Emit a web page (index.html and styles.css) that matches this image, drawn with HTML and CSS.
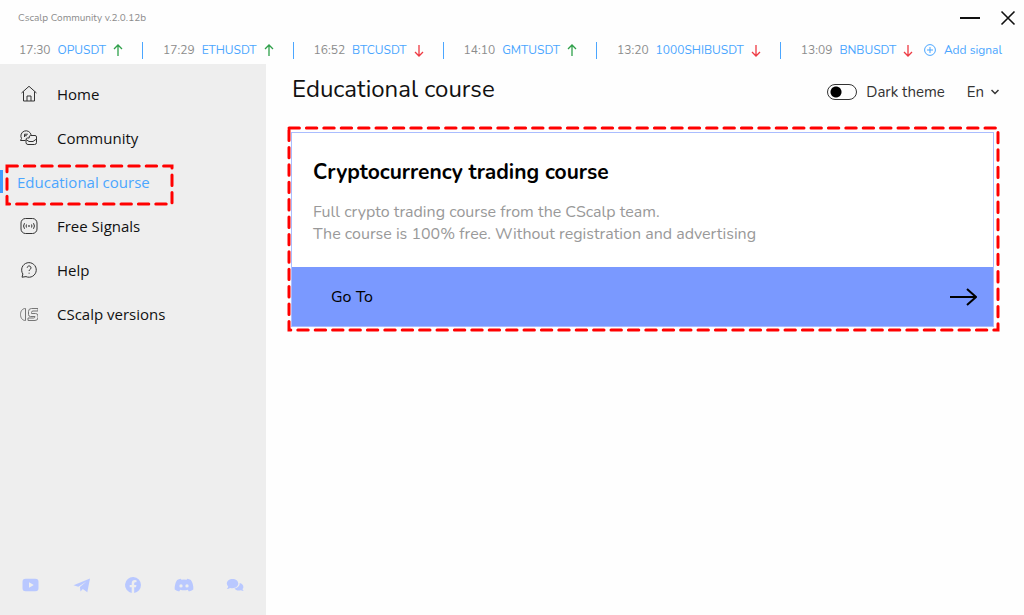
FILE: index.html
```html
<!DOCTYPE html>
<html lang="en">
<head>
    <meta charset="UTF-8">
    <meta name="viewport" content="width=device-width, initial-scale=1.0">
    <title>Cscalp Community</title>
    <link rel="stylesheet" href="styles.css">
</head>
<body>

    <header>
        <div class="titlebar">
            <span>Cscalp Community v.2.0.12b</span>
            <div class="window_buttons">
                <button aria-label="Minimize">
                    <svg width="20" height="16" viewBox="0 0 20 16"><path d="M0 8h20" stroke="#111" stroke-width="2"/></svg>
                </button>
                <button aria-label="Close">
                    <svg width="16" height="16" viewBox="0 0 16 16"><path d="M1.5 1.5l13 13M14.5 1.5l-13 13" stroke="#111" stroke-width="1.6"/></svg>
                </button>
            </div>
        </div>

        <div class="ticker">
            <ul>
                <li><time>17:30</time><a href="#">OPUSDT</a><svg class="up" viewBox="0 0 10 14"><path d="M5 13V2M1 6l4-4 4 4"/></svg></li>
                <li><time>17:29</time><a href="#">ETHUSDT</a><svg class="up" viewBox="0 0 10 14"><path d="M5 13V2M1 6l4-4 4 4"/></svg></li>
                <li><time>16:52</time><a href="#">BTCUSDT</a><svg class="down" viewBox="0 0 10 14"><path d="M5 2v11M1 9l4 4 4-4"/></svg></li>
                <li><time>14:10</time><a href="#">GMTUSDT</a><svg class="up" viewBox="0 0 10 14"><path d="M5 13V2M1 6l4-4 4 4"/></svg></li>
                <li><time>13:20</time><a href="#">1000SHIBUSDT</a><svg class="down" viewBox="0 0 10 14"><path d="M5 2v11M1 9l4 4 4-4"/></svg></li>
                <li><time>13:09</time><a href="#">BNBUSDT</a><svg class="down" viewBox="0 0 10 14"><path d="M5 2v11M1 9l4 4 4-4"/></svg></li>
            </ul>
            <button class="add_signal">
                <svg width="12" height="12" viewBox="0 0 12 12"><circle cx="6" cy="6" r="5.4"/><path d="M6 3v6M3 6h6"/></svg>
                Add signal
            </button>
        </div>
    </header>

    <div class="page">
        <aside>
            <nav>
                <a href="#">
                    <svg viewBox="0 0 18 18"><path d="M1.5 8L9 1.300 16.500 8M3.500 6.500v9.500h11V6.500M7 16v-5h4v5"/></svg>
                    Home
                </a>
                <a href="#">
                    <svg viewBox="0 0 18 18"><path d="M5.500 11.500H.500L1.500 9.500A5.200 5.200 0 1 1 11.200 6.200M4.500 8V5.200h3.300M4.500 6.700h2.300M6 10.500a1.500 1.500 0 0 1 1.500-1.500h1.700V8A1.500 1.500 0 0 1 10.700 6.500h4.300A1.500 1.500 0 0 1 16.500 8v5.500a2 2 0 0 1-2 2H8a2 2 0 0 1-2-2zM6 10.500l3 2h4l3.500-2.500"/></svg>
                    Community
                </a>
                <a href="#" class="active">
                    <span>Educational course</span>
                    <svg class="dashes" aria-hidden="true"><rect width="100%" height="100%"/></svg>
                </a>
                <a href="#">
                    <svg viewBox="0 0 18 18"><rect x="1" y="1.500" width="16" height="15" rx="4.500"/><path d="M4.500 6.200a5 5 0 0 0 0 5.600M6.500 7.500a3 3 0 0 0 0 3M13.500 6.200a5 5 0 0 1 0 5.600M11.500 7.500a3 3 0 0 1 0 3"/><circle cx="9" cy="9" r=".5"/></svg>
                    Free Signals
                </a>
                <a href="#">
                    <svg viewBox="0 0 18 18"><path d="M2 16.200l.9-3.200A7.300 7.300 0 1 1 6 15.600zM7.200 6.700a1.900 1.900 0 1 1 2.800 1.800c-.7.400-.9.800-.9 1.500M9.100 11.700v1"/></svg>
                    Help
                </a>
                <a href="#">
                    <svg class="pale" viewBox="0 0 18 18"><path d="M5.500 3.500C2 3.500.500 6.500.500 9.500s1.500 6 5 6zM8.500 9.500V6.500a3 3 0 0 1 3-3H18V6h-5a1.500 1.500 0 0 0-1.500 1.500v1h4A2.500 2.500 0 0 1 18 11v1.500a3 3 0 0 1-3 3H8V13h5.500a1.500 1.500 0 0 0 1.500-1.500h-4.500a2 2 0 0 1-2-2z"/></svg>
                    CScalp versions
                </a>
            </nav>

            <div class="social">
                <a href="#" aria-label="YouTube">
                    <svg viewBox="0 0 20 18"><path fill-rule="evenodd" d="M4.500 2.800h10a3 3 0 0 1 3 3v6.400a3 3 0 0 1-3 3h-10a3 3 0 0 1-3-3V5.800a3 3 0 0 1 3-3zM8 6.200v5.600L12.800 9z"/></svg>
                </a>
                <a href="#" aria-label="Telegram">
                    <svg viewBox="0 0 20 18"><path d="M1.500 9.200L18 2.500l-2.700 13.800-4.500-3.200-2.300 2.300-.6-4.300L14.500 5.500 6.300 10.700z"/></svg>
                </a>
                <a href="#" aria-label="Facebook">
                    <svg viewBox="0 0 20 18"><path d="M18 9A8 8 0 1 0 8.700 16.900v-5.600H6.700V9h2V7.200c0-2 1.200-3.100 3-3.100l1.800.2v2h-1c-1 0-1.300.6-1.300 1.200V9h2.200l-.4 2.300h-1.800v5.600A8 8 0 0 0 18 9z"/></svg>
                </a>
                <a href="#" aria-label="Discord">
                    <svg viewBox="0 0 20 18"><path fill-rule="evenodd" d="M6.800 2.700q-2 .3-3.700 1.200Q.3 8 .700 13.500q2 1.500 4.500 2l1-1.700q3.800 1 7.600 0l1 1.700q2.500-.5 4.500-2Q19.700 8 16.900 3.900q-1.700-.9-3.700-1.200l-.6 1q-2.600-.4-5.200 0zM7 8.300a1.600 1.600 0 1 0 0 3.300 1.600 1.600 0 0 0 0-3.300zm6 0a1.600 1.600 0 1 0 0 3.300 1.600 1.600 0 0 0 0-3.300z"/></svg>
                </a>
                <a href="#" aria-label="Chat">
                    <svg viewBox="0 0 20 18"><path d="M7.500 3c3.300 0 5.800 2 5.800 4.600s-2.500 4.700-5.800 4.700q-1.300 0-2.400-.4-1.500 1-3.300 1 1.200-1.100 1.400-2.500Q1.800 9.200 1.800 7.600C1.800 5 4.300 3 7.500 3zM14.700 7c2.200.5 3.700 2 3.700 3.900q0 1.200-.9 2.200.2 1.100 1.200 2-1.500 0-2.800-.8-.9.300-2 .3c-2 0-3.700-.8-4.500-2.100 3.300-.6 5.500-2.800 5.300-5.500z"/></svg>
                </a>
            </div>
        </aside>

        <main>
            <div class="top">
                <h1>Educational course</h1>
                <div class="settings">
                    <label><input type="checkbox">Dark theme</label>
                    <button class="lang">
                        En
                        <svg width="8" height="6" viewBox="0 0 8 6"><path d="M.500 1L4 4.500 7.500 1"/></svg>
                    </button>
                </div>
            </div>

            <section class="card">
                <div class="text">
                    <h2>Cryptocurrency trading course</h2>
                    <p>Full crypto trading course from the CScalp team.<br>The course is 100% free. Without registration and advertising</p>
                </div>
                <a href="#" class="go">
                    Go To
                    <svg width="28" height="20" viewBox="0 0 28 20"><path d="M1 10h26M18 2l9 8-9 8"/></svg>
                </a>
                <svg class="dashes" aria-hidden="true"><rect width="100%" height="100%"/></svg>
            </section>
        </main>
    </div>

</body>
</html>
```
FILE: styles.css
```css
* {
    box-sizing: border-box;
}

body {
    margin: 0;
    min-height: 100vh;
    display: flex;
    flex-direction: column;
    background: #fefefe;
    color: #111;
    font-family: Nunito, "Noto Sans", sans-serif;
}

a {
    color: inherit;
    text-decoration: none;
}

button {
    padding: 0;
    border: none;
    background: none;
    color: inherit;
    font: inherit;
    cursor: pointer;
}

svg {
    display: block;
    flex: none;
    fill: none;
}

header {
    height: 64px;
    color: #8c8c8c;
}

.titlebar {
    display: flex;
    justify-content: space-between;
    align-items: center;
    height: 36px;
    padding: 0 8px 0 18px;
    font-size: 10px;
}

.window_buttons {
    display: flex;
    gap: 20px;
}

.ticker {
    display: flex;
    justify-content: space-between;
    align-items: center;
    height: 28px;
    padding: 0 22px 0 19px;
    font-size: 12px;
    white-space: nowrap;
}

.ticker ul {
    display: flex;
    margin: 0;
    padding: 0;
    list-style: none;
}

.ticker li {
    display: flex;
    align-items: center;
    height: 17px;
}

.ticker li + li {
    margin-left: 19px;
    padding-left: 20px;
    border-left: 1px solid #4ba6ff;
}

.ticker li a {
    margin: 0 7px;
    color: #4ba6ff;
}

.ticker li svg {
    width: 10px;
    height: 14px;
    stroke-width: 1.3;
}

.up {
    stroke: #2fa04a;
}

.down {
    stroke: #ee3a43;
}

.add_signal {
    display: flex;
    align-items: center;
    gap: 8px;
    color: #4ba6ff;
}

.add_signal svg {
    stroke: #4ba6ff;
}

.page {
    flex: 1;
    display: flex;
}

aside {
    display: flex;
    flex-direction: column;
    justify-content: space-between;
    width: 266px;
    padding: 8px 0 20px;
    background: #eee;
    font-family: "Segoe UI", "Open Sans", sans-serif;
    font-size: 15px;
}

nav a {
    display: flex;
    align-items: center;
    gap: 19px;
    height: 44px;
    padding-left: 20px;
}

nav a > svg:not(.dashes) {
    width: 18px;
    height: 18px;
    stroke: #333;
}

nav a > svg.pale:not(.dashes) {
    stroke: #777;
}

nav a.active {
    position: relative;
    padding-left: 17px;
    color: #4ba6ff;
}

nav a.active::before {
    content: "";
    position: absolute;
    left: 0;
    top: 10px;
    width: 3px;
    height: 23px;
    background: #3f9dff;
}

/* red highlight frame */
.dashes {
    position: absolute;
    overflow: visible;
    stroke: #f00;
    stroke-width: 3;
    stroke-linecap: round;
    stroke-dasharray: 10.4 7;
    pointer-events: none;
}

.active .dashes {
    left: 7px;
    top: 6px;
    width: 165px;
    height: 38px;
}

.social {
    display: flex;
    gap: 31px;
    padding-left: 21px;
}

.social svg {
    width: 20px;
    height: 20px;
    fill: #b9c8ff;
}

main {
    flex: 1;
    min-width: 0;
    padding: 7px 30px 0 25px;
}

.top {
    display: flex;
    justify-content: space-between;
    align-items: center;
    height: 36px;
    margin-bottom: 25px;
    padding-left: 1px;
}

h1 {
    margin: 0;
    font-size: 24px;
    font-weight: 400;
    line-height: 32px;
}

.settings {
    display: flex;
    gap: 22px;
    margin: 5px -5px 0 0;
    color: #333;
    font-size: 15px;
}

.settings label {
    display: flex;
    align-items: center;
    gap: 9px;
}

.settings input {
    appearance: none;
    width: 30px;
    height: 16px;
    margin: 0;
    border: 1px solid #333;
    border-radius: 8px;
    background: radial-gradient(circle at 8px 7px, #000 5px, transparent 6px);
}

.lang {
    display: flex;
    align-items: center;
    gap: 7px;
}

.lang svg {
    stroke: #333;
    stroke-width: 1.5;
}

.card {
    position: relative;
    border: 1px solid #aabdff;
    background: #fff;
}

.text {
    padding: 24px 21px 22px;
}

h2 {
    margin: 0 0 14px;
    color: #000;
    font-size: 21px;
    font-weight: 700;
    line-height: 30px;
}

p {
    margin: 0;
    color: #999;
    font-size: 16px;
    line-height: 22px;
}

.go {
    display: flex;
    justify-content: space-between;
    align-items: center;
    height: 59px;
    padding: 0 16px 0 39px;
    background: #7a99ff;
    color: #000;
    font-size: 16px;
}

.go svg {
    stroke: #000;
    stroke-width: 2;
}

.card .dashes {
    left: -3px;
    top: -5px;
    width: calc(100% + 8px);
    height: calc(100% + 9px);
}
```
